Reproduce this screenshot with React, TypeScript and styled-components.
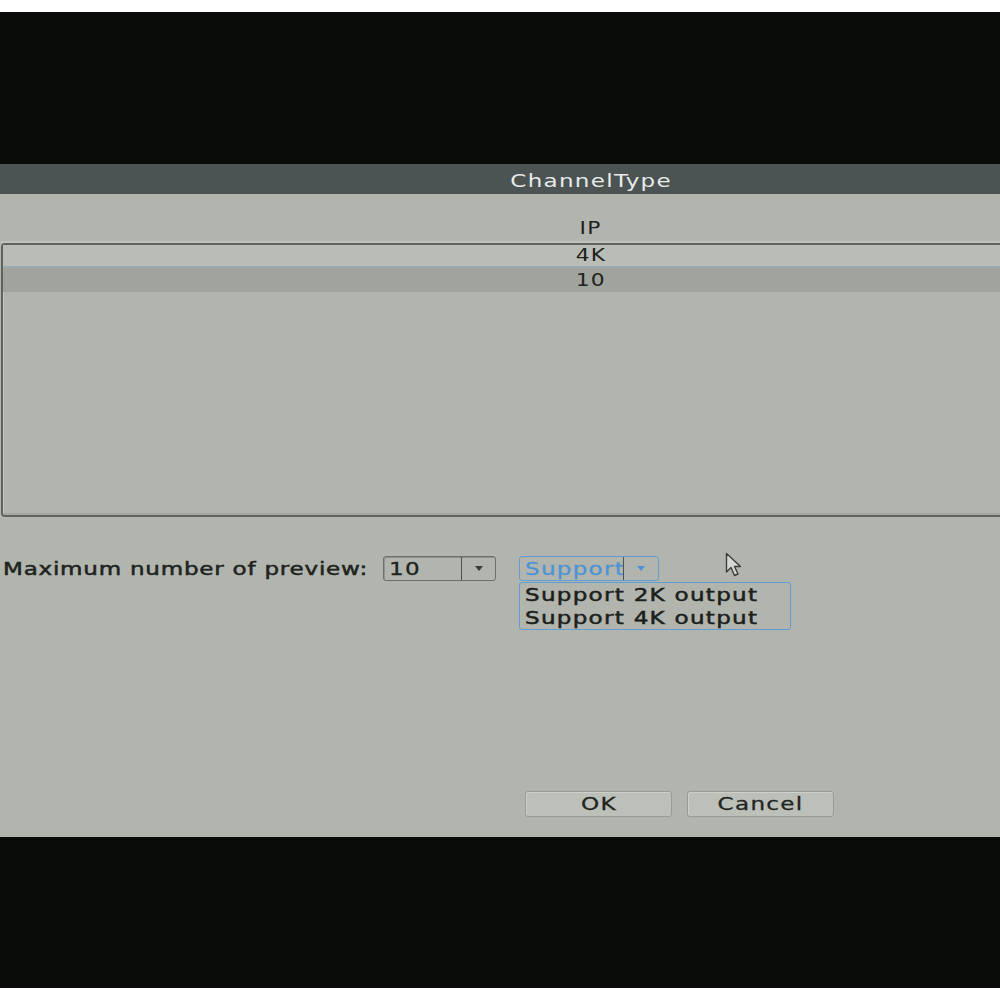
import React from "react"
import styled, { createGlobalStyle } from "styled-components"

const GlobalStyle = createGlobalStyle`
  html, body {
    margin: 0;
    padding: 0;
    background: #ffffff;
  }
  body {
    padding: 12px 0;
    font-family: "DejaVu Sans", "Liberation Sans", sans-serif;
    overflow: hidden;
  }
`

// the OSD font is drawn wide; glyphs are stretched horizontally
const Wide = styled.span<{ $origin?: "left" | "center" }>`
  display: inline-block;
  white-space: nowrap;
  transform: scaleX(1.28);
  transform-origin: ${p => p.$origin ?? "center"} center;
`

const Screen = styled.div`
  height: 976px;
  background: #080b07;
  display: flex;
  align-items: center;
  overflow: hidden;
`

const Dialog = styled.div`
  position: relative;
  flex-shrink: 0;
  width: 1182px;
  height: 673px;
  background: #b1b5ae;
  display: flex;
  flex-direction: column;
`

const TitleBar = styled.div`
  height: 30px;
  background: #4b5453;
  color: #e8ebe9;
  font-size: 18px;
  letter-spacing: 1px;
  display: flex;
  align-items: center;
  justify-content: center;
  padding-top: 3px;
  box-sizing: border-box;
`

const Body = styled.div`
  flex: 1;
  display: flex;
  flex-direction: column;
  padding: 22px 1px 20px 1px;
`

const ColumnHeader = styled.div`
  height: 25px;
  display: flex;
  align-items: center;
  justify-content: center;
  font-size: 17px;
  letter-spacing: 1px;
  color: #1e211e;
  border-bottom: 2px solid #bfc3bc;
`

const ListBox = styled.div`
  height: 270px;
  border: 2px solid #5e645f;
  border-radius: 4px;
  box-shadow: inset 1px 1px 0 #c4c8c1, inset 0 -2px 0 #a3a8a1;
  display: flex;
  flex-direction: column;
`

const ListRow = styled.div<{ $selected?: boolean }>`
  height: ${p => (p.$selected ? 24 : 21)}px;
  background: ${p => (p.$selected ? "#a0a49d" : "#b9bdb6")};
  border-bottom: ${p => (p.$selected ? "none" : "2px solid #9aa9b1")};
  display: flex;
  align-items: center;
  justify-content: center;
  font-size: 17px;
  letter-spacing: 1px;
  color: #1e211e;
`

const FormRow = styled.div`
  position: relative;
  margin-top: 39px;
  display: flex;
  align-items: center;
  height: 25px;
`

const Label = styled.div`
  width: 382px;
  flex-shrink: 0;
  padding-left: 2px;
  box-sizing: border-box;
  font-size: 18px;
  letter-spacing: 0.6px;
  color: #202320;
  -webkit-text-stroke: 0.5px #202320;
`

const Select = styled.div<{ $active?: boolean }>`
  box-sizing: border-box;
  height: 25px;
  width: ${p => (p.$active ? 140 : 113)}px;
  margin-left: ${p => (p.$active ? 23 : 0)}px;
  border: 1px solid ${p => (p.$active ? "#5e9ed2" : "#6b706b")};
  border-radius: 3px;
  box-shadow: ${p => (p.$active ? "none" : "inset 1px 1px 0 #8e938d")};
  display: flex;
  align-items: stretch;
  color: ${p => (p.$active ? "#4b93d4" : "#202320")};
`

const SelectValue = styled.div<{ $active?: boolean }>`
  width: ${p => (p.$active ? 104 : 78)}px;
  display: flex;
  align-items: center;
  padding-left: 5px;
  box-sizing: border-box;
  font-size: 18px;
  letter-spacing: 1px;
  overflow: hidden;
  border-right: 1px solid ${p => (p.$active ? "#4b5453" : "#4a4f4a")};
  -webkit-text-stroke: 0.3px currentColor;
`

const SelectArrow = styled.div<{ $active?: boolean }>`
  flex: 1;
  display: flex;
  align-items: center;
  justify-content: center;
  &::after {
    content: "";
    border-left: 4px solid transparent;
    border-right: 4px solid transparent;
    border-top: 5px solid ${p => (p.$active ? "#4b93d4" : "#3a3e3a")};
  }
`

const Dropdown = styled.div`
  position: absolute;
  left: 518px;
  top: 26px;
  width: 272px;
  height: 48px;
  box-sizing: border-box;
  border: 1px solid #5e9ed2;
  border-radius: 3px;
  padding: 1px 0 0 5px;
  display: flex;
  flex-direction: column;
`

const Option = styled.div`
  height: 23px;
  display: flex;
  align-items: center;
  font-size: 18px;
  letter-spacing: 1px;
  color: #1c1f1c;
  -webkit-text-stroke: 0.5px #1c1f1c;
`

const Cursor = styled.svg`
  position: absolute;
  left: 724px;
  top: -4px;
`

const ButtonRow = styled.div`
  margin-top: auto;
  display: flex;
  gap: 15px;
  padding-left: 524px;
`

const Button = styled.button`
  width: 147px;
  height: 26px;
  box-sizing: border-box;
  background: #bcc0b9;
  border: 1px solid #989c96;
  border-radius: 3px;
  box-shadow: inset 1px 1px 0 #cdd1ca;
  font-family: "DejaVu Sans", "Liberation Sans", sans-serif;
  font-size: 18px;
  letter-spacing: 1px;
  color: #222522;
  padding: 0;
  -webkit-text-stroke: 0.3px #222522;
`

export default function App() {
  return (
    <>
      <GlobalStyle />
      <Screen>
        <Dialog>
          <TitleBar>
            <Wide>ChannelType</Wide>
          </TitleBar>
          <Body>
            <ColumnHeader>
              <Wide>IP</Wide>
            </ColumnHeader>
            <ListBox>
              <ListRow>
                <Wide>4K</Wide>
              </ListRow>
              <ListRow $selected>
                <Wide>10</Wide>
              </ListRow>
            </ListBox>

            <FormRow>
              <Label>
                <Wide $origin="left">Maximum number of preview:</Wide>
              </Label>
              <Select>
                <SelectValue>
                  <Wide $origin="left">10</Wide>
                </SelectValue>
                <SelectArrow />
              </Select>
              <Select $active>
                <SelectValue $active>
                  <Wide $origin="left">Support</Wide>
                </SelectValue>
                <SelectArrow $active />
              </Select>
              <Dropdown>
                <Option>
                  <Wide $origin="left">Support 2K output</Wide>
                </Option>
                <Option>
                  <Wide $origin="left">Support 4K output</Wide>
                </Option>
              </Dropdown>
              <Cursor width="22" height="28" viewBox="0 0 22 28">
                <path
                  d="M1.5 1.5 L1.5 20 L6 15.5 L9.5 23.5 L13 22 L9.5 14.5 L15.5 14.5 Z"
                  fill="#d4d7d2"
                  stroke="#3c403c"
                  strokeWidth="1.4"
                  strokeLinejoin="round"
                />
              </Cursor>
            </FormRow>

            <ButtonRow>
              <Button>
                <Wide>OK</Wide>
              </Button>
              <Button>
                <Wide>Cancel</Wide>
              </Button>
            </ButtonRow>
          </Body>
        </Dialog>
      </Screen>
    </>
  )
}
